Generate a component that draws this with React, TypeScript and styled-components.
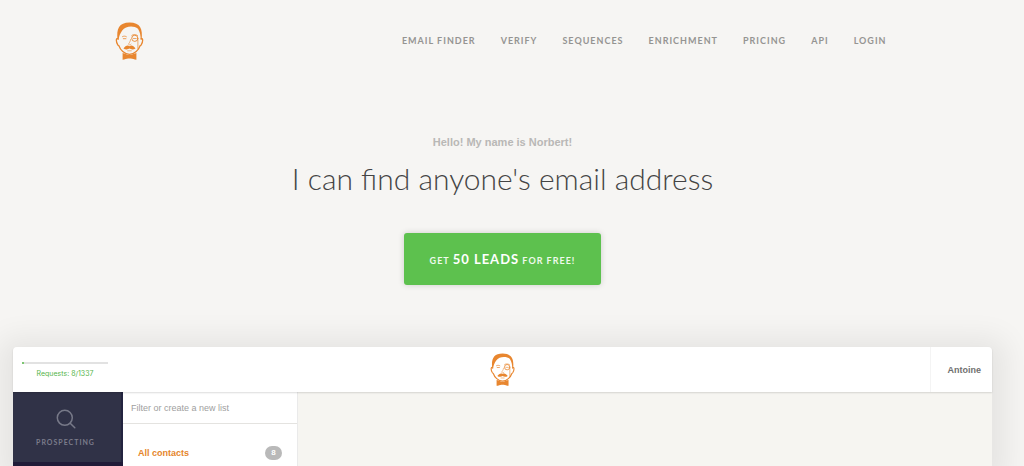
import React from "react";
import styled, { createGlobalStyle } from "styled-components";

const GlobalStyle = createGlobalStyle`
  *, *::before, *::after { box-sizing: border-box; }
  body {
    margin: 0;
    background: #f6f5f3;
    font-family: Lato, "Open Sans", sans-serif;
    color: #444;
  }
`;

const Page = styled.div`
  min-height: 100vh;
  padding: 0 32px 0 13px;
  display: flex;
  flex-direction: column;
  overflow: hidden;
`;

const Header = styled.header`
  display: flex;
  align-items: center;
  justify-content: space-between;
  width: 100%;
  max-width: 776px;
  height: 82px;
  margin: 0 auto;
  padding-right: 4px;
`;

const HomeLink = styled.a`
  display: block;
`;

const Nav = styled.nav`
  display: flex;
  gap: 25px;
`;

const NavLink = styled.a`
  font-size: 9px;
  line-height: 12px;
  font-weight: 700;
  letter-spacing: 1px;
  color: #959492;
  text-decoration: none;
  text-transform: uppercase;
`;

const Hero = styled.section`
  display: flex;
  flex-direction: column;
  align-items: center;
  padding: 52px 0 62px;
  text-align: center;
`;

const Greeting = styled.p`
  margin: 0;
  font-family: "Liberation Sans", Arial, sans-serif;
  font-size: 11px;
  line-height: 16px;
  font-weight: 700;
  color: #b9b8b6;
`;

const Title = styled.h1`
  margin: 8px 0 35px;
  font-size: 30px;
  line-height: 40px;
  font-weight: 300;
  color: #444;
`;

const CallToAction = styled.button`
  height: 52px;
  padding: 0 26px;
  border: 0;
  border-radius: 3px;
  background: #5dc14e;
  box-shadow: 0 0 6px rgba(0, 0, 0, 0.16);
  color: #eefaec;
  font-family: inherit;
  font-size: 9px;
  font-weight: 700;
  letter-spacing: 1px;
  text-transform: uppercase;
  cursor: pointer;
`;

const Emphasis = styled.strong`
  font-size: 13px;
  font-weight: 700;
  color: #fff;
`;

const AppWindow = styled.section`
  flex: 1;
  display: flex;
  flex-direction: column;
  min-height: 119px;
  border-radius: 4px 4px 0 0;
  background: #f6f5f1;
  box-shadow: 0 5px 30px 14px rgba(0, 0, 0, 0.07);
`;

const AppBar = styled.div`
  display: grid;
  grid-template-columns: 1fr auto 1fr;
  align-items: center;
  height: 45px;
  border-radius: 4px 4px 0 0;
  background: #fff;
  box-shadow: 0 1px 2px rgba(0, 0, 0, 0.14);
  z-index: 1;
`;

const Usage = styled.div`
  width: 86px;
  margin-left: 9px;
  padding-top: 2px;
  display: flex;
  flex-direction: column;
  gap: 5px;
`;

const Track = styled.div`
  height: 2px;
  background: #e2e2e2;
`;

const Fill = styled.div`
  width: 2px;
  height: 2px;
  background: #7cc672;
`;

const UsageText = styled.span`
  font-family: Inter, sans-serif;
  font-size: 7px;
  line-height: 10px;
  text-align: center;
  color: #55b54a;
`;

const Account = styled.div`
  justify-self: end;
  display: flex;
  align-items: center;
  justify-content: flex-end;
  width: 62px;
  height: 45px;
  padding-right: 11px;
  border-left: 1px solid #f4f4f4;
  font-family: "Liberation Sans", Arial, sans-serif;
  font-size: 9px;
  font-weight: 700;
  color: #707070;
`;

const Workspace = styled.div`
  flex: 1;
  display: flex;
`;

const Sidebar = styled.nav`
  width: 110px;
  background: #201b38;
`;

const SidebarLink = styled.a`
  display: flex;
  flex-direction: column;
  align-items: center;
  gap: 8px;
  height: 70px;
  padding: 17px 3px 0 0;
  background: #303247;
  border-right: 2px solid #232440;
  color: #7b7c8b;
  font-size: 7px;
  line-height: 10px;
  font-weight: 700;
  letter-spacing: 1px;
  text-decoration: none;
  text-transform: uppercase;
`;

const ListPanel = styled.div`
  width: 175px;
  background: #fff;
  border-right: 1px solid #eaeaea;
`;

const FilterInput = styled.input`
  display: block;
  width: 100%;
  height: 32px;
  padding: 0 8px;
  border: 0;
  border-bottom: 1px solid #e4e3e0;
  background: transparent;
  font-family: "Liberation Sans", Arial, sans-serif;
  font-size: 9px;
  color: #777;
  outline: 0;
  &::placeholder { color: #a0a0a0; opacity: 1; }
`;

const ListLink = styled.a`
  display: flex;
  align-items: center;
  justify-content: space-between;
  padding: 22px 15px 0;
  font-family: "Liberation Sans", Arial, sans-serif;
  font-size: 9px;
  font-weight: 700;
  color: #e5852b;
  text-decoration: none;
`;

const Count = styled.span`
  width: 17px;
  height: 14px;
  border-radius: 7px;
  background: #b9b9b9;
  color: #fff;
  font-size: 8px;
  line-height: 14px;
  text-align: center;
`;

const Face = styled.svg`
  display: block;
`;

function NorbertFace({ width, height }: { width: number; height: number }) {
  return (
    <Face width={width} height={height} viewBox="0 0 30 38" fill="none" stroke="#e8862f" strokeLinecap="round" strokeLinejoin="round" aria-hidden="true">
      <path d="M2.800 16.500C.8 15.800.9 20 2.800 22.800c.5.700 1 .5 1.300 1.400C5 27.500 9.500 32.300 14.500 32.300S24 27.500 24.900 24.200c.3-.9.800-.7 1.300-1.400 1.900-2.800 2-7 0-6.300" strokeWidth="1.300" />
      <path d="M2.600 18C1.200 7 4 .6 14.600 .6S28 7 26.600 18h-.9C25.700 13.500 25 10 23 6.800 19 3.400 10.500 3.800 7.200 8.600 5.200 11.500 4 14 3.600 18z" fill="#e8862f" stroke="none" />
      <path d="M7.500 14.600c1.200-.7 2.800-.6 3.900.1M8.300 16.700h2.600" strokeWidth=".8" />
      <circle cx="19.800" cy="16.300" r="3.100" strokeWidth=".9" />
      <path d="M18.300 16.500h2.900M16.800 13.300c1.500-1.200 4.200-1 5.800.2M22.900 17.500v9.500" strokeWidth=".7" />
      <path d="M15.600 17.500c-.2 2.300-1.600 3.600-2.200 4.700.5.900 2 .9 2.700 0" strokeWidth=".6" />
      <path d="M14.500 24.200c-2-1.400-4.200-.2-6 2.200 1.900 1.400 4.400 1.200 6 .2 1.600 1 4.100 1.200 6-.2-1.800-2.400-4-3.600-6-2.200z" fill="#e8862f" stroke="none" />
      <path d="M12.700 28.800h3.600" strokeWidth=".6" />
      <path d="M7.600 31c2.200.3 4 1.700 5.500 1.800h2.800c1.500-.1 3.300-1.500 5.500-1.800v6.800c-2.200-.2-4-1.300-5.500-1.300h-2.800c-1.500 0-3.300 1.100-5.500 1.300z" fill="#e8862f" stroke="none" />
    </Face>
  );
}

function SearchIcon() {
  return (
    <svg width="20" height="20" viewBox="0 0 20 20" fill="none" stroke="#777988" strokeWidth="1.500" strokeLinecap="round" aria-hidden="true">
      <circle cx="8.800" cy="8.800" r="7.500" />
      <path d="M14.200 14.200l4.600 4.600" />
    </svg>
  );
}

const links = ["Email Finder", "Verify", "Sequences", "Enrichment", "Pricing", "API", "Login"];

export default function App() {
  return (
    <>
      <GlobalStyle />
      <Page>
        <Header>
          <HomeLink href="#" aria-label="Norbert home">
            <NorbertFace width={30} height={38} />
          </HomeLink>
          <Nav>
            {links.map((label) => (
              <NavLink key={label} href="#">{label}</NavLink>
            ))}
          </Nav>
        </Header>
        <Hero>
          <Greeting>Hello! My name is Norbert!</Greeting>
          <Title>I can find anyone's email address</Title>
          <CallToAction type="button">
            Get <Emphasis>50 leads</Emphasis> for free!
          </CallToAction>
        </Hero>
        <AppWindow>
          <AppBar>
            <Usage>
              <Track><Fill /></Track>
              <UsageText>Requests: 8/1337</UsageText>
            </Usage>
            <NorbertFace width={26} height={33} />
            <Account>Antoine</Account>
          </AppBar>
          <Workspace>
            <Sidebar>
              <SidebarLink href="#">
                <SearchIcon />
                Prospecting
              </SidebarLink>
            </Sidebar>
            <ListPanel>
              <FilterInput type="text" aria-label="Filter or create a new list" placeholder="Filter or create a new list" />
              <ListLink href="#">
                All contacts
                <Count>8</Count>
              </ListLink>
            </ListPanel>
          </Workspace>
        </AppWindow>
      </Page>
    </>
  );
}
